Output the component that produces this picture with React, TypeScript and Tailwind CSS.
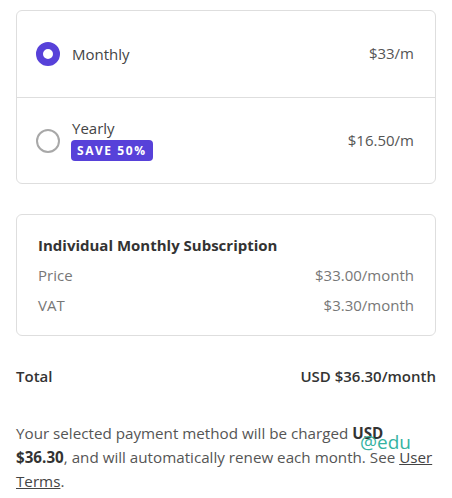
import React, { useState } from 'react';

const Radio = ({ checked }: { checked: boolean }) =>
  checked ? (
    <span className="block h-6 w-6 shrink-0 rounded-full border-[7px] border-[#5741d9] bg-white" />
  ) : (
    <span className="block h-6 w-6 shrink-0 rounded-full border-2 border-[#a8a8a8] bg-white" />
  );

export default function App() {
  const [plan, setPlan] = useState<'monthly' | 'yearly'>('monthly');

  return (
    <div className="relative min-h-[498px] w-[452px] bg-white px-4 pt-[10px] text-[#444] [font-family:'Open_Sans',sans-serif]">
      {/* PLAN PICKER */}
      <div className="rounded-md border border-[#dedede]">
        <button
          onClick={() => setPlan('monthly')}
          className="flex h-[87px] w-full items-center justify-between border-b border-[#dedede] pl-[19px] pr-[21px] text-left"
        >
          <div className="flex items-center gap-[12px]">
            <Radio checked={plan === 'monthly'} />
            <span className="text-[15px] text-[#444]">Monthly</span>
          </div>
          <span className="-mt-[2px] text-[15px] text-[#555]">$33/m</span>
        </button>
        <button
          onClick={() => setPlan('yearly')}
          className="flex h-[85px] w-full items-center justify-between pl-[19px] pr-[21px] text-left"
        >
          <div className="flex items-center gap-[11px]">
            <Radio checked={plan === 'yearly'} />
            <div className="-mt-[3px] flex flex-col items-start">
              <span className="pl-[1px] text-[15px] leading-[20px] text-[#444]">Yearly</span>
              <span className="mt-[2px] rounded-[4px] bg-[#5741d9] px-[6px] py-[2px] text-[12px] font-bold leading-[17px] tracking-[0.13em] text-white">
                SAVE 50%
              </span>
            </div>
          </div>
          <span className="text-[15px] text-[#555]">$16.50/m</span>
        </button>
      </div>

      {/* SUMMARY */}
      <div className="mt-[30px] rounded-md border border-[#dedede] px-[21px] pb-[19px] pt-[19px]">
        <h3 className="text-[15px] font-bold leading-[22px] text-[#333]">Individual Monthly Subscription</h3>
        <div className="mt-[8px] flex justify-between text-[15px] leading-[22px] text-[#777]">
          <span>Price</span>
          <span>$33.00/month</span>
        </div>
        <div className="mt-[8px] flex justify-between text-[15px] leading-[22px] text-[#777]">
          <span>VAT</span>
          <span>$3.30/month</span>
        </div>
      </div>

      {/* TOTAL */}
      <div className="mt-[29px] flex justify-between text-[15px] font-semibold leading-[22px] text-[#333]">
        <span>Total</span>
        <span>USD $36.30/month</span>
      </div>

      <p className="mt-[34px] text-[15.2px] leading-[24px] text-[#555]">
        Your selected payment method will be charged <strong className="text-[#333]">USD $36.30</strong>, and will
        automatically renew each month. See{' '}
        <a href="#" className="text-[#444] underline">
          User Terms
        </a>
        .
      </p>

      <span className="absolute left-[360px] top-[433px] text-[19px] leading-none text-[#35b3a2]">@edu</span>
    </div>
  );
}
